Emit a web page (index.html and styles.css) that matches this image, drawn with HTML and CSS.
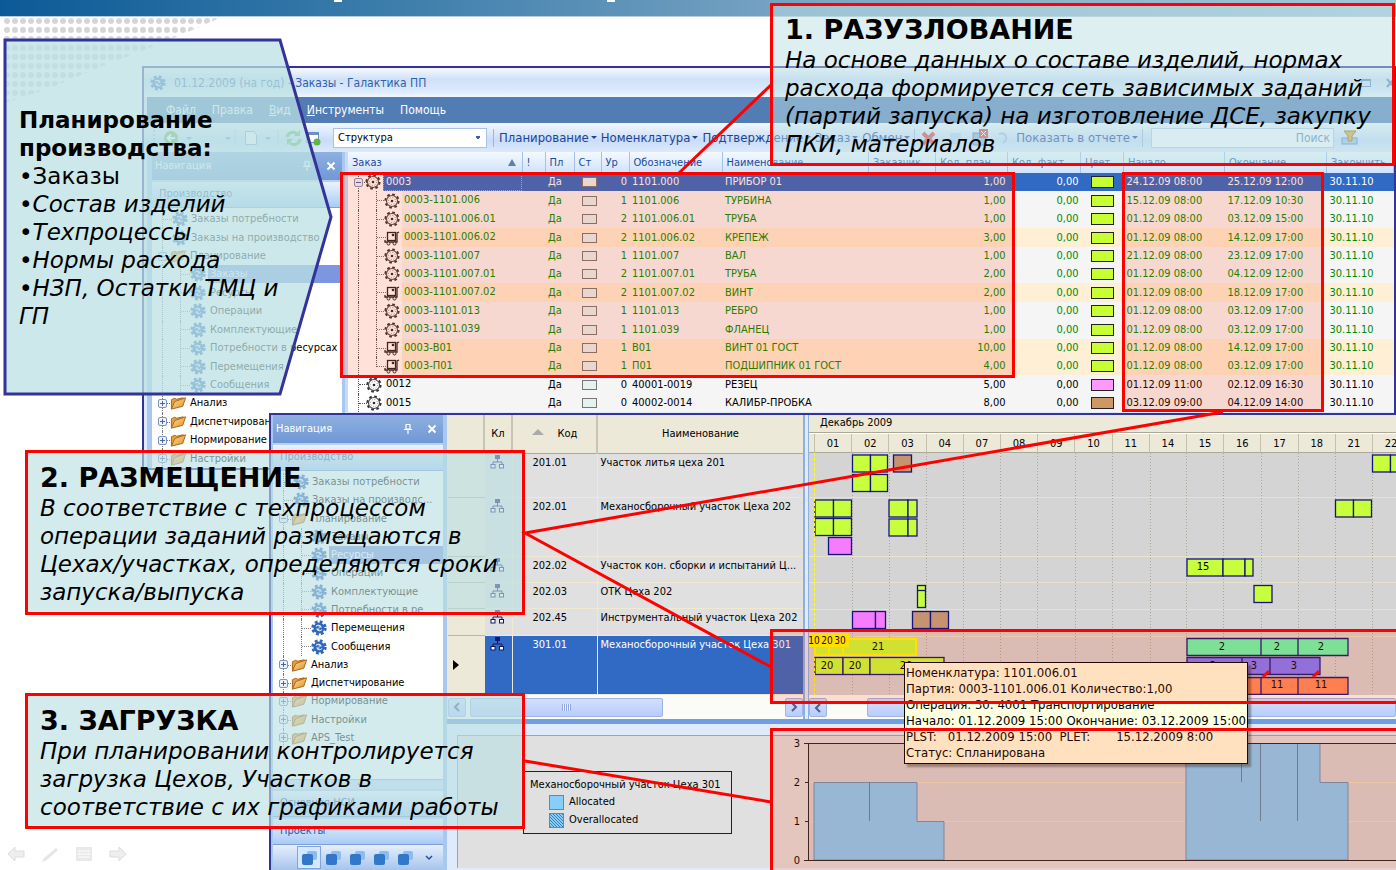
FILE: index.html
```html
<!DOCTYPE html>
<html lang="ru">
<head>
<meta charset="utf-8">
<title>Планирование производства</title>
<link rel="stylesheet" href="styles.css">
</head>
<body>
<svg class="defs" aria-hidden="true">
  <defs>
    <linearGradient id="gold" x1="0" y1="0" x2="1" y2="1"><stop offset="0" stop-color="#ffe3a0"/><stop offset="1" stop-color="#e08a1c"/></linearGradient>
    <pattern id="dots" width="8" height="9" patternUnits="userSpaceOnUse" x="3" y="16"><circle cx="4" cy="5" r="3" fill="#d6d6d6"/></pattern>
    <pattern id="hatch" width="3" height="3" patternUnits="userSpaceOnUse"><rect width="3" height="3" fill="#87cefa"/><path d="M0 0L3 3" stroke="#3f7fb0"/></pattern>
    <symbol id="gear" viewBox="0 0 16 16"><circle cx="8" cy="8" r="6.300" fill="none" stroke="#2f68bd" stroke-width="2.800" stroke-dasharray="2.750 2.200"/><circle cx="8" cy="8" r="5.500" fill="#2f68bd"/><path d="M5 6.500c1.500-1.800 4-1.500 5 .5H7.500M11 9.500c-1.500 1.800-4 1.500-5-.5h2.500" fill="none" stroke="#e6f0fb" stroke-width="1.100"/></symbol>
    <symbol id="part" viewBox="0 0 16 16"><circle cx="8" cy="8" r="6.600" fill="none" stroke="#333" stroke-width="2" stroke-dasharray="2.700 2.480"/><circle cx="8" cy="8" r="5.500" fill="#fff" stroke="#444" stroke-width="1.100"/><circle cx="8" cy="8" r="3.500" fill="none" stroke="#888" stroke-dasharray="1 1.750"/><circle cx="8" cy="8" r="1.300" fill="#2a2a2a"/></symbol>
    <symbol id="cart" viewBox="0 0 16 16"><rect x="3.500" y="2.500" width="8" height="8" fill="#fff" stroke="#222" stroke-width="1.300"/><circle cx="9" cy="5" r="1.300" fill="#222"/><path d="M1 10v2h12V3l2-1" fill="none" stroke="#222" stroke-width="1.300"/><circle cx="4.500" cy="13.500" r="1.500" fill="#fff" stroke="#222"/><circle cx="10.500" cy="13.500" r="1.500" fill="#fff" stroke="#222"/></symbol>
    <symbol id="folder" viewBox="0 0 18 16"><path d="M1.500 14.500V4.500L5 3l2 1 7-1.500V5" fill="#e9a13a" stroke="#a5631a"/><path d="M1.500 14.500L5 6.500l11.500-4-3 9z" fill="url(#gold)" stroke="#a5631a"/></symbol>
    <symbol id="plus" viewBox="0 0 9 9"><rect x=".5" y=".5" width="8" height="8" rx="1.500" fill="#eef3fb" stroke="#7b93bd"/><path d="M2 4.500h5M4.500 2v5" stroke="#4a679c"/></symbol>
    <symbol id="minus" viewBox="0 0 9 9"><rect x=".5" y=".5" width="8" height="8" rx="1.500" fill="#eef3fb" stroke="#7b93bd"/><path d="M2 4.500h5" stroke="#4a679c"/></symbol>
    <symbol id="pin" viewBox="0 0 10 12"><path d="M3 1.500h4V6H3zM1 6.500h8M5 7v4" fill="none" stroke="#fff" stroke-width="1.200"/></symbol>
    <symbol id="cross" viewBox="0 0 10 10"><path d="M1.500 1.500l7 7M8.500 1.500l-7 7" stroke="#fff" stroke-width="2"/></symbol>
    <symbol id="org" viewBox="0 0 15 15"><rect x="5" y="1" width="5" height="4" fill="#14146e"/><path d="M7.500 5v3M3 11V8h9v3" fill="none" stroke="#14146e"/><rect x="1" y="10.500" width="4" height="3.500" fill="#fff" stroke="#14146e"/><rect x="9.500" y="10.500" width="4" height="3.500" fill="#fff" stroke="#14146e"/></symbol>
    <symbol id="stack" viewBox="0 0 16 16"><rect x="6" y="1" width="10" height="9" rx="2" fill="#8cbcf0"/><rect x="1" y="4" width="11" height="11" rx="2" fill="#3179c8"/></symbol>
  </defs>
</svg>
<main class="slide">
  <div class="banner"></div>
  <svg class="decor" width="350" height="110" aria-hidden="true"><polygon points="3,17 222,17 160,44 100,67 50,88 3,104" fill="url(#dots)"/><path d="M334 0h8v2h-8z M607 0h8v2h-8z" fill="#fff"/></svg>

  <section class="win orders">
    <header class="title"><svg width="16" height="16"><use href="#gear"/></svg><span>01.12.2009 (на год) - Заказы - Галактика ПП</span>
      <svg class="winbtns" width="62" height="12"><path d="M4 9h7" stroke="#5b86bd" stroke-width="2"/><rect x="29.500" y="2.500" width="9" height="7" fill="none" stroke="#5b86bd"/><path d="M29 3h10" stroke="#5b86bd" stroke-width="2"/><path d="M55 2l7 8M62 2l-7 8" stroke="#5b86bd" stroke-width="2"/></svg></header>
    <nav class="menu"><button>Файл</button><button>Правка</button><button><u>В</u>ид</button><button><u>И</u>нструменты</button><button>Помощь</button></nav>
    <div class="tools">
      <svg class="lead" width="170" height="24"><path d="M3 4v16" stroke="#9bb8e2" stroke-dasharray="2 2" stroke-width="2"/><circle cx="20" cy="12" r="7" fill="#5fae3f"/><path d="M24 12h-7M20 8.500L16.500 12l3.500 3.500" fill="none" stroke="#fff" stroke-width="2"/><path d="M35 11l3 3 3-3zM74 11l3 3 3-3zM114 11l3 3 3-3z" fill="#6f8fc0"/><path d="M84 4v16M127 4v16" stroke="#a9c2e8"/><path d="M94.500 5.500h8l3 3v10h-11z" fill="#fff" stroke="#7b9acb"/><path d="M136 11a6 6 0 0 1 10-3M149 13a6 6 0 0 1-10 4" fill="none" stroke="#5fb34a" stroke-width="3"/><path d="M149 4v6h-6zM136 19v-6h6z" fill="#5fb34a"/><rect x="155.500" y="6.500" width="12" height="10" fill="#fff" stroke="#6d8fc4"/><path d="M155 8h13" stroke="#6d8fc4" stroke-width="2"/><circle cx="166" cy="16" r="3.500" fill="#5fb34a"/></svg>
      <select aria-label="Вид списка"><option>Структура</option></select>
      <i class="sep"></i>
      <button class="dd">Планирование</button><button class="dd">Номенклатура</button><button class="dd">Подтверждение</button><button class="dd">Заказ</button><button class="dd">Обмен</button>
      <i class="sep"></i>
      <svg width="96" height="20"><path d="M3 5l11 11M14 5L3 16" stroke="#e0413c" stroke-width="4"/><rect x="30" y="5" width="11" height="11" fill="#bcd3ee"/><rect x="53" y="5" width="13" height="12" fill="#8fb2dd" stroke="#5c7fae"/><rect x="59" y="1" width="9" height="9" fill="#e0413c"/><path d="M61 3l5 5M66 3l-5 5" stroke="#fff"/><path d="M79 6c7-3 10 6 4 9" fill="none" stroke="#a9bfe0" stroke-width="2"/></svg>
      <button class="dd">Показать в отчете</button><i class="sep"></i>
      <input class="search" type="text" placeholder="Поиск" aria-label="Поиск">
      <svg class="filter" width="18" height="18"><rect x="1" y="9" width="15" height="6" fill="#9cc4ee" stroke="#5b86bd"/><path d="M3 2h12l-4 5v5H7V7z" fill="#e3a42d" stroke="#a06f16"/></svg>
    </div>
    <div class="body">
      <aside class="nav">
        <div class="navhead"><span>Навигация</span><svg width="10" height="12"><use href="#pin"/></svg><svg width="10" height="10"><use href="#cross"/></svg></div>
        <div class="group">Производство</div>
        <ul class="tree">
          <li class="leaf"><svg width="16" height="16"><use href="#gear"/></svg>Заказы потребности</li>
          <li class="leaf"><svg width="16" height="16"><use href="#gear"/></svg>Заказы на производство</li>
          <li class="fold"><svg width="9" height="9"><use href="#minus"/></svg><svg width="17" height="16"><use href="#folder"/></svg>Планирование</li>
          <li class="sub sel"><svg width="16" height="16"><use href="#gear"/></svg><span>Заказы</span></li>
          <li class="sub"><svg width="16" height="16"><use href="#gear"/></svg><span>Ресурсы</span></li>
          <li class="sub"><svg width="16" height="16"><use href="#gear"/></svg><span>Операции</span></li>
          <li class="sub"><svg width="16" height="16"><use href="#gear"/></svg><span>Комплектующие</span></li>
          <li class="sub"><svg width="16" height="16"><use href="#gear"/></svg><span>Потребности в ресурсах</span></li>
          <li class="sub"><svg width="16" height="16"><use href="#gear"/></svg><span>Перемещения</span></li>
          <li class="sub"><svg width="16" height="16"><use href="#gear"/></svg><span>Сообщения</span></li>
          <li class="fold"><svg width="9" height="9"><use href="#plus"/></svg><svg width="17" height="16"><use href="#folder"/></svg>Анализ</li>
          <li class="fold"><svg width="9" height="9"><use href="#plus"/></svg><svg width="17" height="16"><use href="#folder"/></svg>Диспетчирование</li>
          <li class="fold"><svg width="9" height="9"><use href="#plus"/></svg><svg width="17" height="16"><use href="#folder"/></svg>Нормирование</li>
          <li class="fold"><svg width="9" height="9"><use href="#plus"/></svg><svg width="17" height="16"><use href="#folder"/></svg>Настройки</li>
        </ul>
      </aside>
      <div class="gridwrap">
      <table class="grid">
        <colgroup><col class="w174"><col class="w23"><col class="w29"><col class="w27"><col class="w28"><col class="w93"><col><col class="w67"><col class="w72"><col class="w73"><col class="w43"><col class="w101"><col class="w102"><col class="w67"></colgroup>
        <thead><tr><th><div class="sorted">Заказ<i></i></div></th><th>!</th><th>Пл</th><th>Ст</th><th>Ур</th><th>Обозначение</th><th>Наименование</th><th>Заказчик</th><th>Кол. план</th><th>Кол. факт</th><th>Цвет</th><th>Начало</th><th>Окончание</th><th>Закончить</th></tr></thead>
        <tbody>
          <tr class="cur"><td><div class="node root"><svg width="9" height="9"><use href="#minus"/></svg><svg width="16" height="16"><use href="#part"/></svg><span>0003</span></div></td><td></td><td>Да</td><td><i class="st"></i></td><td>0</td><td>1101.000</td><td>ПРИБОР 01</td><td></td><td>1,00</td><td>0,00</td><td><i class="clr"></i></td><td>24.12.09 08:00</td><td>25.12.09 12:00</td><td>30.11.10</td></tr>
          <tr><td><div class="node child"><svg width="16" height="16"><use href="#part"/></svg><span>0003-1101.006</span></div></td><td></td><td>Да</td><td><i class="st"></i></td><td>1</td><td>1101.006</td><td>ТУРБИНА</td><td></td><td>1,00</td><td>0,00</td><td><i class="clr"></i></td><td>15.12.09 08:00</td><td>17.12.09 10:30</td><td>30.11.10</td></tr>
          <tr><td><div class="node child"><svg width="16" height="16"><use href="#part"/></svg><span>0003-1101.006.01</span></div></td><td></td><td>Да</td><td><i class="st"></i></td><td>2</td><td>1101.006.01</td><td>ТРУБА</td><td></td><td>1,00</td><td>0,00</td><td><i class="clr"></i></td><td>01.12.09 08:00</td><td>03.12.09 15:00</td><td>30.11.10</td></tr>
          <tr class="buy"><td><div class="node child"><svg width="16" height="16"><use href="#cart"/></svg><span>0003-1101.006.02</span></div></td><td></td><td>Да</td><td><i class="st"></i></td><td>2</td><td>1101.006.02</td><td>КРЕПЕЖ</td><td></td><td>3,00</td><td>0,00</td><td><i class="clr"></i></td><td>01.12.09 08:00</td><td>14.12.09 17:00</td><td>30.11.10</td></tr>
          <tr><td><div class="node child"><svg width="16" height="16"><use href="#part"/></svg><span>0003-1101.007</span></div></td><td></td><td>Да</td><td><i class="st"></i></td><td>1</td><td>1101.007</td><td>ВАЛ</td><td></td><td>1,00</td><td>0,00</td><td><i class="clr"></i></td><td>21.12.09 08:00</td><td>23.12.09 17:00</td><td>30.11.10</td></tr>
          <tr><td><div class="node child"><svg width="16" height="16"><use href="#part"/></svg><span>0003-1101.007.01</span></div></td><td></td><td>Да</td><td><i class="st"></i></td><td>2</td><td>1101.007.01</td><td>ТРУБА</td><td></td><td>2,00</td><td>0,00</td><td><i class="clr"></i></td><td>01.12.09 08:00</td><td>04.12.09 12:00</td><td>30.11.10</td></tr>
          <tr class="buy"><td><div class="node child"><svg width="16" height="16"><use href="#cart"/></svg><span>0003-1101.007.02</span></div></td><td></td><td>Да</td><td><i class="st"></i></td><td>2</td><td>1101.007.02</td><td>ВИНТ</td><td></td><td>2,00</td><td>0,00</td><td><i class="clr"></i></td><td>01.12.09 08:00</td><td>18.12.09 17:00</td><td>30.11.10</td></tr>
          <tr><td><div class="node child"><svg width="16" height="16"><use href="#part"/></svg><span>0003-1101.013</span></div></td><td></td><td>Да</td><td><i class="st"></i></td><td>1</td><td>1101.013</td><td>РЕБРО</td><td></td><td>1,00</td><td>0,00</td><td><i class="clr"></i></td><td>01.12.09 08:00</td><td>03.12.09 17:00</td><td>30.11.10</td></tr>
          <tr><td><div class="node child"><svg width="16" height="16"><use href="#part"/></svg><span>0003-1101.039</span></div></td><td></td><td>Да</td><td><i class="st"></i></td><td>1</td><td>1101.039</td><td>ФЛАНЕЦ</td><td></td><td>1,00</td><td>0,00</td><td><i class="clr"></i></td><td>01.12.09 08:00</td><td>03.12.09 17:00</td><td>30.11.10</td></tr>
          <tr class="buy"><td><div class="node child"><svg width="16" height="16"><use href="#cart"/></svg><span>0003-В01</span></div></td><td></td><td>Да</td><td><i class="st"></i></td><td>1</td><td>В01</td><td>ВИНТ 01 ГОСТ</td><td></td><td>10,00</td><td>0,00</td><td><i class="clr"></i></td><td>01.12.09 08:00</td><td>14.12.09 17:00</td><td>30.11.10</td></tr>
          <tr class="buy"><td><div class="node child last"><svg width="16" height="16"><use href="#cart"/></svg><span>0003-П01</span></div></td><td></td><td>Да</td><td><i class="st"></i></td><td>1</td><td>П01</td><td>ПОДШИПНИК 01 ГОСТ</td><td></td><td>4,00</td><td>0,00</td><td><i class="clr"></i></td><td>01.12.09 08:00</td><td>03.12.09 17:00</td><td>30.11.10</td></tr>
          <tr class="top"><td><div class="node"><svg width="16" height="16"><use href="#part"/></svg><span>0012</span></div></td><td></td><td>Да</td><td><i class="st"></i></td><td>0</td><td>40001-0019</td><td>РЕЗЕЦ</td><td></td><td>5,00</td><td>0,00</td><td><i class="clr pink"></i></td><td>01.12.09 11:00</td><td>02.12.09 16:30</td><td>30.11.10</td></tr>
          <tr class="top"><td><div class="node"><svg width="16" height="16"><use href="#part"/></svg><span>0015</span></div></td><td></td><td>Да</td><td><i class="st"></i></td><td>0</td><td>40002-0014</td><td>КАЛИБР-ПРОБКА</td><td></td><td>8,00</td><td>0,00</td><td><i class="clr brown"></i></td><td>03.12.09 09:00</td><td>04.12.09 14:00</td><td>30.11.10</td></tr>
        </tbody>
      </table>
      </div>
    </div>
  </section>

  <section class="win plan">
    <aside class="nav">
      <div class="navhead"><span>Навигация</span><svg width="10" height="12"><use href="#pin"/></svg><svg width="10" height="10"><use href="#cross"/></svg></div>
      <div class="group">Производство</div>
      <ul class="tree">
        <li class="leaf"><svg width="16" height="16"><use href="#gear"/></svg>Заказы потребности</li>
        <li class="leaf"><svg width="16" height="16"><use href="#gear"/></svg>Заказы на производс...</li>
        <li class="fold"><svg width="9" height="9"><use href="#minus"/></svg><svg width="17" height="16"><use href="#folder"/></svg>Планирование</li>
        <li class="sub"><svg width="16" height="16"><use href="#gear"/></svg><span>Заказы</span></li>
        <li class="sub sel"><svg width="16" height="16"><use href="#gear"/></svg><span>Ресурсы</span></li>
        <li class="sub"><svg width="16" height="16"><use href="#gear"/></svg><span>Операции</span></li>
        <li class="sub"><svg width="16" height="16"><use href="#gear"/></svg><span>Комплектующие</span></li>
        <li class="sub"><svg width="16" height="16"><use href="#gear"/></svg><span>Потребности в ре</span></li>
        <li class="sub"><svg width="16" height="16"><use href="#gear"/></svg><span>Перемещения</span></li>
        <li class="sub"><svg width="16" height="16"><use href="#gear"/></svg><span>Сообщения</span></li>
        <li class="fold"><svg width="9" height="9"><use href="#plus"/></svg><svg width="17" height="16"><use href="#folder"/></svg>Анализ</li>
        <li class="fold"><svg width="9" height="9"><use href="#plus"/></svg><svg width="17" height="16"><use href="#folder"/></svg>Диспетчирование</li>
        <li class="fold"><svg width="9" height="9"><use href="#plus"/></svg><svg width="17" height="16"><use href="#folder"/></svg>Нормирование</li>
        <li class="fold"><svg width="9" height="9"><use href="#plus"/></svg><svg width="17" height="16"><use href="#folder"/></svg>Настройки</li>
        <li class="fold"><svg width="9" height="9"><use href="#plus"/></svg><svg width="17" height="16"><use href="#folder"/></svg>APS_Test</li>
      </ul>
      <div class="grip"></div>
      <div class="group">Основная НСИ</div>
      <div class="group">Проекты</div>
      <div class="packs"><button class="on" aria-label="Раздел 1"><svg width="16" height="16"><use href="#stack"/></svg></button><button aria-label="Раздел 2"><svg width="16" height="16"><use href="#stack"/></svg></button><button aria-label="Раздел 3"><svg width="16" height="16"><use href="#stack"/></svg></button><button aria-label="Раздел 4"><svg width="16" height="16"><use href="#stack"/></svg></button><button aria-label="Раздел 5"><svg width="16" height="16"><use href="#stack"/></svg></button><button aria-label="Ещё"><svg width="8" height="8"><path d="M1 2l3 3 3-3" fill="none" stroke="#2a4f9c" stroke-width="1.500"/></svg></button></div>
    </aside>
    <div class="work">
      <div class="upper">
        <div class="left">
          <table class="res">
            <colgroup><col class="w36"><col class="w28"><col class="w85"><col></colgroup>
            <thead><tr><th></th><th>Кл</th><th><i class="up"></i>Код</th><th>Наименование</th></tr></thead>
            <tbody>
              <tr class="h44"><td></td><td><svg width="15" height="15"><use href="#org"/></svg></td><td>201.01</td><td>Участок литья цеха 201</td></tr>
              <tr class="h59"><td></td><td><svg width="15" height="15"><use href="#org"/></svg></td><td>202.01</td><td>Механосборочный участок Цеха 202</td></tr>
              <tr class="h26"><td></td><td><svg width="15" height="15"><use href="#org"/></svg></td><td>202.02</td><td>Участок кон. сборки и испытаний Ц...</td></tr>
              <tr class="h26"><td></td><td><svg width="15" height="15"><use href="#org"/></svg></td><td>202.03</td><td>ОТК Цеха 202</td></tr>
              <tr class="h27"><td></td><td><svg width="15" height="15"><use href="#org"/></svg></td><td>202.45</td><td>Инструментальный участок Цеха 202</td></tr>
              <tr class="h59 cur"><td><i class="mark"></i></td><td><svg width="15" height="15"><use href="#org"/></svg></td><td>301.01</td><td>Механосборочный участок Цеха 301</td></tr>
            </tbody>
          </table>
          <div class="scroll"><button aria-label="Влево"><svg width="8" height="10"><path d="M6 1L2 5l4 4" fill="none" stroke="#4d6185" stroke-width="2"/></svg></button><span class="thumb"><i></i></span><button aria-label="Вправо"><svg width="8" height="10"><path d="M2 1l4 4-4 4" fill="none" stroke="#4d6185" stroke-width="2"/></svg></button></div>
        </div>
        <div class="gantt">
          <div class="month">Декабрь 2009</div>
          <div class="days"><div class="run"><span>01</span><span>02</span><span>03</span><span>04</span><span>07</span><span>08</span><span>09</span><span>10</span><span>11</span><span>14</span><span>15</span><span>16</span><span>17</span><span>18</span><span>21</span></div><span>22</span></div>
          <svg class="chart" width="587" height="242" viewBox="809 453 587 242">
            <rect x="809" y="453" width="587" height="242" fill="#d4d4d4"/>
            <path d="M809 497.500h587M809 556.500h587M809 582.500h587M809 609.500h587M809 636.500h587" stroke="#e8e3cd"/>
            <path d="M852.500 453v242M889.500 453v242M926.500 453v242M963.500 453v242M1000.500 453v242M1037.500 453v242M1075.500 453v242M1112.500 453v242M1150.500 453v242M1186.500 453v242M1223.500 453v242M1261.500 453v242M1298.500 453v242M1335.500 453v242M1372.500 453v242" stroke="#aaa798" stroke-dasharray="1 2"/>
            <g fill="#c8ff3c" stroke="#14147c" stroke-width="1.300">
              <rect x="852.500" y="455" width="18" height="17"/><rect x="870.500" y="455" width="17" height="17"/>
              <rect x="852.500" y="474.500" width="18" height="17"/><rect x="870.500" y="474.500" width="17" height="17"/>
              <rect x="1372.500" y="455" width="18" height="17"/><rect x="1390.500" y="455" width="18" height="17"/>
              <rect x="815" y="500" width="18.500" height="17"/><rect x="833.500" y="500" width="18" height="17"/>
              <rect x="815" y="518.500" width="18.500" height="17"/><rect x="833.500" y="518.500" width="18" height="17"/>
              <rect x="889" y="500" width="19" height="17"/><rect x="908" y="500" width="9" height="17"/>
              <rect x="889" y="519" width="19" height="17"/><rect x="908" y="519" width="9" height="17"/>
              <rect x="1335.500" y="500" width="18" height="17"/><rect x="1353.500" y="500" width="18" height="17"/>
              <rect x="1187" y="559" width="36" height="17"/><rect x="1223" y="559" width="22" height="17"/><rect x="1245" y="559" width="8" height="17"/>
              <rect x="917.500" y="585.500" width="8" height="22"/><path d="M917 590.500h9"/>
              <rect x="1254" y="585.500" width="18" height="17"/>
              <rect x="815" y="657.500" width="28" height="17"/><rect x="843" y="657.500" width="27" height="17"/><rect x="870" y="657.500" width="74" height="17"/>
            </g>
            <g fill="#f57bff" stroke="#14147c" stroke-width="1.300"><rect x="828.500" y="537.500" width="23" height="17"/><rect x="852.500" y="611.500" width="23" height="17"/><rect x="875.500" y="611.500" width="10" height="17"/></g>
            <g fill="#c6926f" stroke="#14147c" stroke-width="1.300"><rect x="893.500" y="455" width="18" height="17"/><rect x="912.500" y="611.500" width="18" height="17"/><rect x="930.500" y="611.500" width="18" height="17"/></g>
            <g fill="#c8ff3c" stroke="#ffff00" stroke-width="2"><rect x="815" y="639" width="14" height="16"/><rect x="829" y="639" width="14" height="16"/><rect x="843" y="639" width="73" height="16"/></g>
            <rect x="809" y="633" width="40" height="14" fill="#ffff00"/>
            <g stroke="#14147c" stroke-width="1.300"><path fill="#66ffb0" d="M1187 638.500h74v17h-74zM1261 638.500h37v17h-37zM1298 638.500h50v17h-50z"/><path fill="#807aff" d="M1187 657.500h55v17h-55zM1242 657.500h28v17h-28zM1270 657.500h50v17h-50z"/><path fill="#ff8c5e" d="M1187 677.500h74v17h-74zM1261 677.500h37v17h-37zM1298 677.500h50v17h-50z"/></g>
            <path d="M1263 677l6-6M1313 677l6-6" stroke="#ff0000" stroke-width="3"/>
            <path d="M814.500 453v242" stroke="#ffff00" stroke-dasharray="3 2"/>
            <g class="lbl"><text x="1203" y="570">15</text><text x="878" y="650">21</text><text x="827" y="669">20</text><text x="855" y="669">20</text><text x="906" y="669">20</text><text x="1222" y="650">2</text><text x="1277" y="650">2</text><text x="1321" y="650">2</text><text x="1213" y="669">3</text><text x="1254" y="669">3</text><text x="1294" y="669">3</text><text x="1277" y="688">11</text><text x="1321" y="688">11</text></g>
            <g class="lbl small"><text x="814" y="644">10</text><text x="827" y="644">20</text><text x="840" y="644">30</text></g>
          </svg>
          <div class="scroll"><button aria-label="Влево"><svg width="8" height="10"><path d="M6 1L2 5l4 4" fill="none" stroke="#4d6185" stroke-width="2"/></svg></button><span class="thumb wide"></span></div>
        </div>
      </div>
      <div class="load">
        <div class="legend"><b>Механосборочный участок Цеха 301</b><span><svg width="15" height="15"><rect x=".5" y=".5" width="14" height="14" fill="#87cefa" stroke="#4d90b8"/></svg>Allocated</span><span><svg width="15" height="15"><rect x=".5" y=".5" width="14" height="14" fill="url(#hatch)" stroke="#4d90b8"/></svg>Overallocated</span></div>
        <svg class="bars" width="616" height="132" viewBox="780 736 616 132">
          <rect x="808" y="743" width="588" height="117" fill="#d4d4d4"/>
          <path d="M808 782.500h588M808 821.500h588" stroke="#e8dfc0"/>
          <path d="M814 860V782.500h103V821.500h27V860zM1186 860V743.500h134V782.500h28V860z" fill="#87cefa" stroke="#6a93b4"/>
          <path d="M869.500 782v39M1241.500 743v39M1260.500 743v78M1297.500 743v78" stroke="#5f86a8"/>
          <path d="M1400 743.500H808.500V860.500H1400M804 743.500h5M805 782.500h4M805 821.500h4M804 860.500h5" fill="none" stroke="#222"/>
          <g class="lbl"><text x="797" y="747">3</text><text x="797" y="786">2</text><text x="797" y="825">1</text><text x="797" y="864">0</text></g>
        </svg>
      </div>
    </div>
  </section>

  <div class="tip" role="tooltip"><span>Номенклатура: 1101.006.01</span><span>Партия: 0003-1101.006.01 Количество:1,00</span><span>Операция: 30: 4001 Транспортирование</span><span>Начало: 01.12.2009 15:00 Окончание: 03.12.2009 15:00</span><span>PLST:&nbsp;&nbsp; 01.12.2009 15:00&nbsp; PLET:&nbsp;&nbsp;&nbsp;&nbsp;&nbsp;&nbsp; 15.12.2009 8:00</span><span>Статус: Спланирована</span></div>

  <div class="mark-area tree-area"></div>
  <div class="mark-area date-area"></div>
  <div class="mark-area row-area"></div>
  <div class="mark-area load-area"></div>
  <svg class="lines" width="1396" height="870" aria-hidden="true"><path d="M772 84L679 173M1223 412L525 533L771 667M525 761L771 802" fill="none" stroke="#ff0000" stroke-width="3"/></svg>

  <section class="inputs">
    <svg width="330" height="358" aria-hidden="true"><polygon points="2,2 277,2 328,179 277,356 2,356" fill="#bbe0e3" fill-opacity=".75" stroke="#333399" stroke-width="3"/></svg>
    <div class="text"><h2>Планирование<br>производства:</h2><ul><li class="plain">Заказы</li><li>Состав изделий</li><li>Техпроцессы</li><li>Нормы расхода</li><li>НЗП, Остатки ТМЦ и<br>ГП</li></ul></div>
  </section>
  <section class="callout c1"><h2>1. РАЗУЗЛОВАНИЕ</h2><p>На основе данных о составе изделий, нормах<br>расхода формируется сеть зависимых заданий<br>(партий запуска) на изготовление ДСЕ, закупку<br>ПКИ, материалов</p></section>
  <section class="callout c2"><h2>2. РАЗМЕЩЕНИЕ</h2><p>В соответствие с техпроцессом<br>операции заданий размещаются в<br>Цехах/участках, определяются сроки<br>запуска/выпуска</p></section>
  <section class="callout c3"><h2>3. ЗАГРУЗКА</h2><p>При планировании контролируется<br>загрузка Цехов, Участков в<br>соответствие с их графиками работы</p></section>
  <div class="show">
    <button aria-label="Назад"><svg width="18" height="18"><path d="M1 9l7-7v4h9v6H8v4z" fill="#eee" stroke="#ddd"/></svg></button>
    <button aria-label="Перо"><svg width="18" height="18"><path d="M1 17L3 13 15 3l2 2L6 15z" fill="#e6e6e6"/></svg></button>
    <button aria-label="Меню"><svg width="18" height="18"><rect x="1" y="2" width="16" height="14" fill="#e9e9e9"/><path d="M3 6h12M3 9h12M3 12h12" stroke="#fff"/></svg></button>
    <button aria-label="Вперёд"><svg width="18" height="18"><path d="M17 9l-7-7v4H1v6h9v4z" fill="#eee" stroke="#ddd"/></svg></button>
  </div>
</main>
</body>
</html>
```
FILE: styles.css
```css
* { box-sizing: border-box; }
body { margin: 0; background: #fff; font: 11px/14px "DejaVu Sans Condensed", "Noto Sans", sans-serif; color: #000; }
button { border: 0; padding: 0; margin: 0; background: none; font: inherit; color: inherit; }
ul, p, h2 { margin: 0; padding: 0; list-style: none; }
svg { display: block; flex: none; }
.defs { position: absolute; width: 0; height: 0; }
.slide { position: relative; min-height: 870px; overflow: hidden; }
.banner { height: 17px; background: linear-gradient(90deg, #0c5a97, #3c7dab 28%, #7fa8c6 60%, #a8c6da); border-bottom: 1px solid #b5cbd9; }
.decor { position: absolute; left: 0; top: 0; overflow: visible; }

.win { position: absolute; right: 0; isolation: isolate; border: 2px solid #333399; background: #dfebfc; }
.orders { left: 142px; top: 66px; }
.title { display: flex; align-items: center; gap: 8px; height: 29px; padding-left: 6px; font-size: 12px; color: #2d62ad; background: linear-gradient(#f4f9ff, #cfe0f8 40%, #dcebfd 80%, #f2f8ff); }
.winbtns { margin-left: auto; }
.menu { display: flex; align-items: center; gap: 16px; height: 26px; margin-left: 3px; padding-left: 19px; font-size: 12px; color: #fff; background: #527cb4; }
.tools { display: flex; align-items: center; height: 29px; padding-left: 7px; font-size: 13px; color: #1c4596; background: linear-gradient(#f3f8ff, #c9dcf8 60%, #dce9fb); white-space: nowrap; }
.tools select { width: 154px; height: 20px; margin: 0 6px 0 12px; padding: 0 4px; border: 1px solid #a9c1e6; appearance: none; font: inherit; font-size: 11px; color: #000; background: linear-gradient(45deg, transparent 50%, #3a62a8 50%) no-repeat right 8px center / 3px 3px, linear-gradient(-45deg, transparent 50%, #3a62a8 50%) no-repeat right 5px center / 3px 3px, #fff; }
.sep { flex: none; width: 1px; height: 18px; margin-right: 5px; background: #9bb6de; }
.dd { display: flex; flex: none; align-items: center; gap: 2px; margin-right: 4px; }
.dd::after { content: ""; border: 3px solid transparent; border-top-color: #1c4596; border-bottom: 0; }
.search { width: 183px; height: 20px; margin-left: auto; padding: 0 3px; border: 1px solid #b4c8e6; background: #f4f9ff; font: inherit; font-size: 12px; text-align: right; }
.search::placeholder { color: #5d7fb8; }
.filter { margin: 0 35px 0 7px; }
.body { display: flex; }
.nav { flex: none; background: #fff; }
.orders .nav { width: 198px; margin-left: 3px; border-left: 5px solid #a9c8f0; border-right: 3px solid #a9c8f0; }
.navhead { display: flex; align-items: center; gap: 14px; height: 28px; padding: 0 6px 0 3px; color: #fff; background: linear-gradient(#8fb0e0, #6f98d6); }
.navhead span { flex: 1; }
.group { height: 28px; padding-left: 7px; border-top: 2px solid #b7d1f4; border-bottom: 1px solid #7ba1d8; line-height: 24px; color: #2a58a8; background: linear-gradient(#eaf3ff, #a9cbf6); }
.tree { display: flex; flex-direction: column; }
.orders .tree { height: 260px; padding-top: 2px; }
.tree li { position: relative; flex: 1; display: flex; align-items: center; gap: 3px; padding-left: 20px; white-space: nowrap; }
.tree li::before { content: ""; position: absolute; left: 10px; top: 0; bottom: 0; border-left: 1px dotted #777; }
.tree li::after { content: ""; position: absolute; left: 11px; top: 50%; width: 9px; border-top: 1px dotted #777; }
.tree .fold { padding-left: 6px; }
.tree .fold svg { position: relative; z-index: 1; }
.tree .sub { padding-left: 38px; }
.tree .sub::after { left: 28px; top: 0; bottom: 0; width: 10px; border: 0; border-left: 1px dotted #777; background: repeating-linear-gradient(90deg, #888 0 1px, transparent 1px 2px) center / 100% 1px no-repeat; }
.sub span { flex: 1; padding-left: 2px; margin-left: -1px; }
.sub.sel span { color: #fff; background: #7c96df; line-height: 18px; }
.gridwrap { flex: 1; min-width: 0; padding-left: 3px; background: #c7daf6; align-self: flex-start; }
.grid { width: 100%; table-layout: fixed; border-collapse: collapse; white-space: nowrap; color: #008a00; background: #f5f5f5; }
.grid th { height: 21px; padding: 0 0 0 4px; overflow: hidden; font-weight: 400; text-align: left; color: #1c4a9a; border-right: 1px solid #a4c2ec; background: linear-gradient(#f4f9ff, #cfe2fb); }
.sorted { display: flex; justify-content: space-between; align-items: center; padding-right: 6px; }
.sorted i { border: 4px solid transparent; border-top: 0; border-bottom: 7px solid #5d7fa8; }
.grid td { height: 18px; padding: 0 2px 0 3px; }
.grid td:first-child { padding: 0; background: #fff; }
.grid td:nth-child(5), .grid td:nth-child(9), .grid td:nth-child(10) { text-align: right; }
.grid td:nth-child(4) { padding-left: 8px; }
.grid td:nth-child(11) { padding-left: 10px; }
.w174 { width: 174px; } .w23 { width: 23px; } .w29 { width: 29px; } .w27 { width: 27px; } .w28 { width: 28px; } .w93 { width: 93px; } .w67 { width: 67px; } .w72 { width: 72px; } .w73 { width: 73px; } .w43 { width: 43px; } .w101 { width: 101px; } .w102 { width: 102px; } .w36 { width: 36px; } .w85 { width: 85px; }
.st { display: block; width: 15px; height: 10px; border: 1px solid #777; background: #e6f2f2; }
.clr { display: block; width: 23px; height: 12px; border: 1px solid #222; background: #c8ff32; }
.pink { background: #ff99ff; }
.brown { background: #cc9966; }
.node { position: relative; display: flex; align-items: stretch; gap: 2px; height: 18px; padding-left: 18px; }
.node svg { align-self: center; }
.grid tr:nth-child(5n+2) .node, .grid tr:nth-child(5n+4) .node { height: 19px; }
.node::before { content: ""; position: absolute; left: 10px; top: 0; bottom: 0; border-left: 1px dotted #555; }
.node::after { content: ""; position: absolute; left: 11px; top: 9px; width: 8px; border-top: 1px dotted #555; }
.node.root { padding-left: 6px; }
.node.root svg { position: relative; z-index: 1; }
.node.child { padding-left: 36px; }
.node.child::after { left: 28px; top: 0; bottom: 0; width: 9px; border: 0; border-left: 1px dotted #555; background: repeating-linear-gradient(90deg, #777 0 1px, transparent 1px 2px) center / 100% 1px no-repeat; }
.node.last::after { bottom: 8px; background-position: bottom; }
.node span { flex: 1; padding-left: 2px; line-height: 18px; background: #f5f5f5; }
.grid .cur { color: #fff; background: #316ac5; }
.grid .cur span { background: #316ac5; border: 1px dotted #9db6e4; line-height: 16px; }
.grid .buy, .buy .node span { background: #feefd5; }
.grid .top { color: #000; }

.plan { left: 269px; top: 413px; display: flex; border-right: 0; }
.plan .nav { width: 176px; border-left: 2px solid #a9c8f0; border-right: 4px solid #a9c8f0; }
.plan .tree { height: 309px; padding: 2px 0 32px; border-bottom: 1px solid #8fb0de; }
.grip { height: 9px; background: radial-gradient(circle, #5577aa 1px, transparent 1px) center / 5px 5px no-repeat, #c9dcf8; }
.packs { display: flex; align-items: center; height: 25px; padding-left: 24px; background: linear-gradient(#e6effc, #a8c4ec); }
.packs button { display: flex; width: 24px; height: 23px; align-items: center; justify-content: center; }
.packs .on { border: 1px solid #7fa5dc; background: #d5e8ff; }
.work { flex: 1; min-width: 0; background: #dfebfc; }
.upper { display: flex; border-bottom: 5px solid #6f9fe0; }
.left { flex: none; width: 358px; padding-left: 1px; border-right: 2px solid #8fb0de; background: #ece9d8; }
.res { width: 100%; table-layout: fixed; border-collapse: collapse; background: #e0e0e0; white-space: nowrap; }
.res th { height: 38px; padding: 0; font-weight: 400; background: #ece9d8; border-right: 2px solid #c9c5b4; border-bottom: 1px solid #aca899; }
.res th:last-child, .res td:last-child { border-right: 0; }
.up { display: inline-block; margin: 0 14px 2px 0; border: 6px solid transparent; border-top: 0; border-bottom-color: #aaa; }
.res td { padding: 2px 3px; vertical-align: top; border-right: 1px solid #ece9d8; border-bottom: 1px solid #efe9cf; }
.res td:first-child { background: #ece9d8; border-bottom-color: #b9b5a4; }
.res td:nth-child(2) { padding: 0 5px; }
.res td:nth-child(3) { padding-left: 20px; }
.res .cur td { color: #fff; background: #316ac5; }
.res .cur td:first-child { background: #ece9d8; vertical-align: middle; padding-left: 5px; }
.mark { display: block; width: 0; border: 5px solid transparent; border-left: 6px solid #000; border-right: 0; }
.h44 { height: 44px; } .h59 { height: 59px; } .h26 { height: 26px; } .h27 { height: 27px; }
.scroll { display: flex; height: 24px; padding: 3px 0 2px; background: #fbfbf8; }
.scroll button, .thumb { display: flex; align-items: center; justify-content: center; width: 18px; border: 1px solid #9db5e6; border-radius: 2px; background: linear-gradient(#d3e0fd, #b9cdfa); }
.scroll .thumb { width: 193px; margin: 0 auto 0 4px; }
.thumb i { width: 9px; height: 7px; background: repeating-linear-gradient(90deg, #8fa8e0 0 1px, #eaf0ff 1px 2px); }
.scroll .wide { flex: 1; margin: 0 0 0 40px; }
.gantt { flex: 1; min-width: 0; overflow: hidden; margin-left: 3px; border-left: 1px solid #8fb0de; background: #d4d4d4; }
.month { height: 18px; padding-left: 11px; line-height: 16px; background: #ece9d8; border-bottom: 1px solid #aca899; }
.days { display: flex; height: 20px; padding-left: 5px; background: #ece9d8; border-top: 1px solid #fff; border-bottom: 1px solid #aca899; line-height: 19px; text-align: center; }
.run { flex: none; display: grid; width: 558px; grid-template-columns: repeat(15, 1fr); }
.days span { border-left: 1px solid #c4c0ae; }
.days > span { flex: none; width: 37px; }
.lbl { font-size: 11px; text-anchor: middle; }
.small { font-size: 10px; }
.load { display: flex; align-items: flex-start; justify-content: space-between; margin: 11px 0 0 10px; border: 1px solid #8aa8c8; border-width: 1px 0 0 1px; background: #e0e0e0; }
.legend { width: 209px; margin: 35px 0 0 65px; padding: 4px 6px; border: 1px solid #222; white-space: nowrap; }
.legend b { display: block; line-height: 17px; font-weight: 400; }
.legend span { display: flex; align-items: center; gap: 5px; height: 18px; padding-left: 19px; }

.tip { position: absolute; left: 904px; top: 662px; padding: 2px 1px; border: 1px solid #000; background: #ffffe1; box-shadow: 3px 3px 2px rgba(0, 0, 0, .35); font-size: 13px; line-height: 16px; white-space: nowrap; }
.tip span { display: block; }
.mark-area { position: absolute; border: 3px solid #ff0000; background: rgba(255, 51, 0, .15); }
.tree-area { left: 340px; top: 172px; width: 675px; height: 206px; }
.date-area { left: 1122px; top: 172px; width: 202px; height: 240px; }
.row-area { left: 770px; top: 629px; right: -4px; height: 75px; }
.load-area { left: 770px; top: 728px; right: -4px; height: 146px; }
.lines { position: absolute; left: 0; top: 0; }
.inputs { position: absolute; left: 3px; top: 38px; font: 23px/28px "DejaVu Sans", sans-serif; white-space: nowrap; }
.text { position: absolute; left: 16px; top: 68px; }
.text h2 { font-size: 23px; }
.text li { font-style: italic; }
.text li::before { content: "•"; font-style: normal; }
.text .plain { font-style: normal; }
.callout { position: absolute; padding: 9px 12px 0; border: 3px solid #ff0000; background: rgba(187, 224, 227, .63); font: italic 23px/28px "DejaVu Sans", sans-serif; white-space: nowrap; }
.callout h2 { font: bold 27px/32px "DejaVu Sans", sans-serif; }
.c1 { left: 770px; top: 3px; right: 1px; height: 163px; padding-top: 8px; background: rgba(187, 224, 227, .5); }
.c2 { left: 25px; top: 450px; width: 500px; height: 165px; }
.c3 { left: 25px; top: 693px; width: 500px; height: 136px; }
.show { position: absolute; left: 7px; top: 845px; display: flex; gap: 16px; }
```
